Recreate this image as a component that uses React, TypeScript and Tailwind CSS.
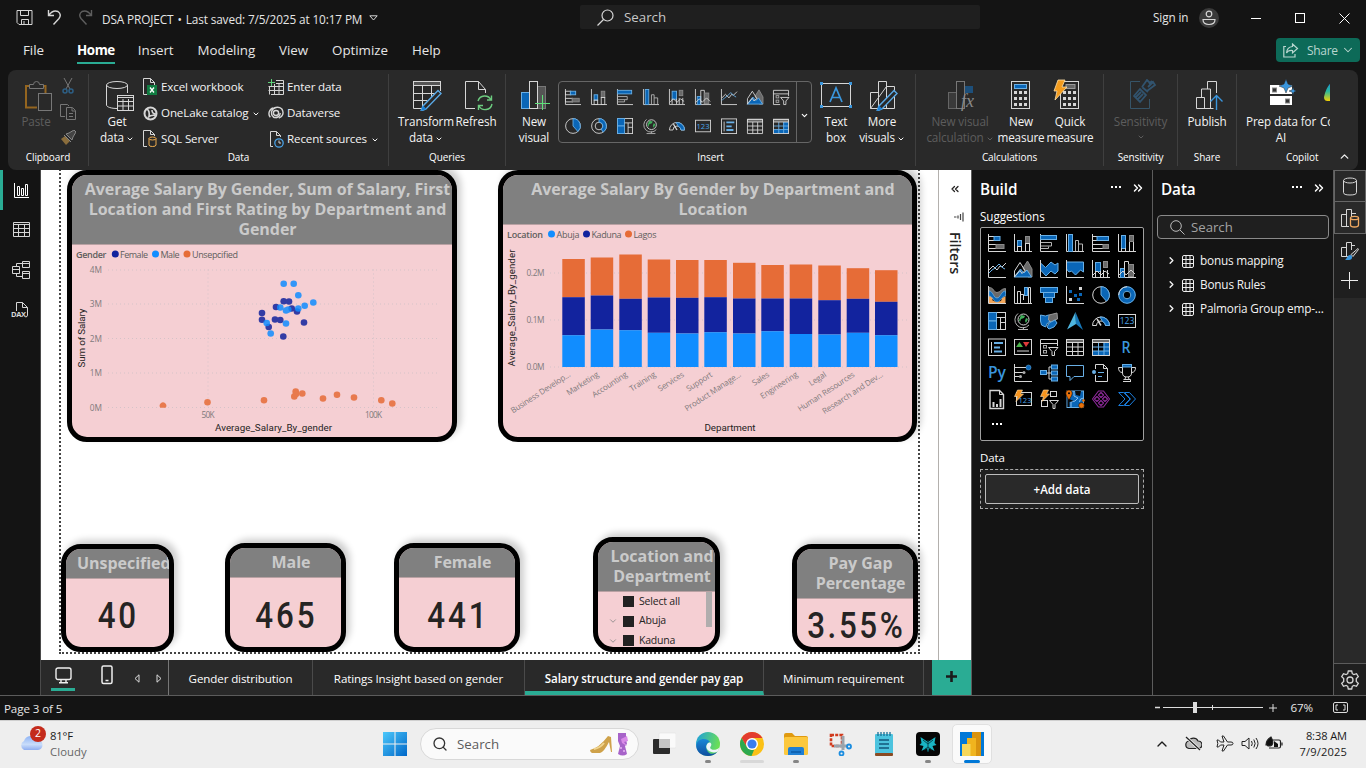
import React from "react";
import { ChevronDown, ChevronUp, ChevronRight, ChevronsLeft, ChevronsRight, Search } from "lucide-react";

const W = "#d6d6d6";
const B = "#0a66b7";
const LB = "#69afe5";
const G = "#6a6a6a";

/* ---------- Visual-type icons, drawn on an 18 x 18 grid ---------- */
const axis = <path d="M.5 0v17.5H18" stroke={W} fill="none" />;
const bolt = <path d="M3.5 0h5L6.5 4h3L2 11.5l1.5-5H.5z" fill="#f7941d" stroke="#ffe0b0" strokeWidth=".6" />;

const VIZ: Record<string, React.ReactNode> = {
  stackedBar: (<>{axis}<rect x=".5" y="2.5" width="6" height="4" stroke={W} fill="none" /><rect x="6" y="2.5" width="6" height="4" stroke={LB} fill={B} /><rect x=".5" y="10.5" width="8" height="4" stroke={W} fill="none" /><rect x="8" y="10.5" width="8" height="4" stroke="#8a8a8a" fill={G} /></>),
  stackedCol: (<>{axis}<rect x="3.5" y="6.5" width="4" height="6" stroke={LB} fill={B} /><rect x="3.5" y="12.5" width="4" height="5" stroke={W} fill="none" /><rect x="11.5" y="2.5" width="4" height="7" stroke="#8a8a8a" fill={G} /><rect x="11.5" y="9.5" width="4" height="8" stroke={W} fill="none" /></>),
  clusteredBar: (<>{axis}<rect x=".5" y="1.5" width="16" height="4" stroke={LB} fill={B} /><path d="M1 8.5h10.5v3.5H1M1 14.5h7.5v-2" stroke="#b5b5b5" fill="none" /></>),
  clusteredCol: (<>{axis}<rect x="2.5" y=".5" width="4" height="17" stroke={LB} fill={B} /><path d="M9.5 17V6.5h3V17M12.5 10h4v7" stroke="#b5b5b5" fill="none" /></>),
  bar100: (<>{axis}<rect x=".5" y="2.5" width="6" height="4" stroke={W} fill="none" /><rect x="5" y="2.5" width="11.5" height="4" stroke={LB} fill={B} /><rect x=".5" y="10.5" width="11" height="4" stroke={W} fill="none" /><rect x="11" y="10.5" width="5.5" height="4" stroke="#8a8a8a" fill={G} /></>),
  col100: (<>{axis}<rect x="3.5" y="1.5" width="4" height="13" stroke={LB} fill={B} /><path d="M3.5 14v3.5M7.5 14v3.5M11.5 7v10.5M15.5 7v10.5" stroke={W} /><rect x="11.5" y="1.5" width="4" height="6" stroke="#8a8a8a" fill={G} /></>),
  line: (<>{axis}<path d="M1 10l4-4 4 4 3-4 2 1 4-4" stroke={W} fill="none" /><path d="M1 13l3-3 3-2 4-4 4 4 2 1" stroke={LB} fill="none" /></>),
  area: (<><path d="M13.5 1L18 9v8h-4L9 8z" fill={G} stroke="#8a8a8a" /><path d="M0 17L6.5 9l3.500 4 3-3 4.500 7z" fill={B} stroke={LB} /><path d="M.5 11L6 2.500l5 8-3 3-2-3L.5 17z" fill="none" stroke={W} /></>),
  stackedArea: (<><path d="M.5 3l5 4.500L11 2l4 3 3-2v8l-3 3-4-3-5 5-5.500-6z" fill={B} stroke={LB} />{axis}</>),
  area100: (<><path d="M.5 2h17v10l-3-2-5 5-4-4-2.500 1L.5 9z" fill={B} stroke={LB} />{axis}</>),
  lineStackedCol: (<>{axis}<rect x="3.5" y="2.5" width="5" height="9" stroke={LB} fill={B} /><path d="M3.5 11v6M8.5 11v6M11.5 10v7M15.5 10v7" stroke={W} /><rect x="11.5" y="1.5" width="4" height="6" stroke="#8a8a8a" fill={G} /><path d="M1 15l4-4 4 4 4-4 4 3" stroke={W} fill="none" /></>),
  lineClusteredCol: (<>{axis}<rect x="2.5" y="8.5" width="4" height="9" stroke={LB} fill={B} /><path d="M6.5 17V1.5h4V17" stroke={W} fill="none" /><rect x="10.5" y="4.5" width="5" height="12" stroke="#8a8a8a" fill={G} /><path d="M1 15l4-4 3 4 5-5 4 4" stroke={W} fill="none" /></>),
  ribbon: (<><path d="M1 1.5c5 0 4.500 5 8 5s4-4 8.500-4V7c-4 0-5 5-8.500 5S5 6 1 6z" fill={G} stroke="#8a8a8a" /><path d="M1 9l5 3-2 2 4 2 5-1 1-3 3.500-2v7H1z" fill="#f2a65a" /><path d="M1 5c4 0 4.500 7 8 7s4-7 8.500-7v5c-4 0-5 6-8.500 6S5 10 1 10z" fill={B} stroke={LB} strokeWidth=".7" /><path d="M.5 0v17.5H18" stroke={W} fill="none" /></>),
  waterfall: (<>{axis}<path d="M3.5 17V5.5h3V17M6.5 8.5h3V14M14.5 17V1.5h2V17" stroke={W} fill="none" /><rect x="10.5" y="1.5" width="3" height="8" stroke={LB} fill={B} /></>),
  funnel: (<><rect x=".5" y="1.5" width="17" height="5" stroke={LB} fill={B} /><rect x="3.5" y="6.5" width="11" height="5" stroke={LB} fill={B} /><rect x="5.5" y="11.5" width="7" height="5" stroke={LB} fill={B} /></>),
  scatter: (<>{axis}<g fill={B}><rect x="3" y="4" width="3" height="3" /><rect x="8" y="8" width="3" height="3" /><rect x="13" y="7" width="3" height="3" /><rect x="11" y="12" width="3" height="3" /></g><rect x="13" y="1" width="3" height="3" fill={W} /><rect x="3" y="12" width="3" height="3" fill={W} /></>),
  pie: (<><circle cx="9" cy="9" r="8.3" stroke={W} fill="none" /><path d="M9 .7a8.300 8.300 0 0 1 5.500 14.500L9 9z" fill={B} stroke={LB} /></>),
  donut: (<><circle cx="9" cy="9" r="6.2" stroke={B} strokeWidth="4.5" fill="none" /><circle cx="9" cy="9" r="8.3" stroke={LB} fill="none" /><path d="M9 .7a8.300 8.300 0 0 0-8.300 8.300" stroke={W} fill="none" /><circle cx="9" cy="9" r="3.8" stroke={LB} fill="none" /></>),
  donutPart: (<><circle cx="9" cy="9" r="8.3" stroke={W} fill="none" /><circle cx="9" cy="9" r="4.3" stroke={W} fill="none" /><path d="M9 .7a8.300 8.300 0 0 1 4.500 15.200L11.500 12.500A4.300 4.300 0 0 0 9 4.700z" fill={B} stroke={LB} /></>),
  treemap: (<><rect x=".5" y=".5" width="17" height="17" stroke={W} fill="none" /><rect x=".5" y=".5" width="8" height="8.5" fill={B} stroke={LB} /><rect x=".5" y="9" width="8" height="8.5" fill={B} stroke={LB} /><path d="M8.5 5.5h9M12.5 5.5v12M12.5 10.5h5" stroke={W} /></>),
  map: (<><circle cx="9.5" cy="7.5" r="5.5" stroke={W} fill="none" /><path d="M7 3l4 1-1 2-3 1-1 3-1-2zM12 6l2 1-2 4-1-2z" fill="#3fae5a" /><path d="M4 1.5a8 8 0 1 0 11 11.500M9.500 15v2M4 17.500h10" stroke="#b5b5b5" fill="none" /></>),
  filledMap: (<><path d="M.5 3l5 1 3-1 3 1v4l-4 3-2 4-4-2-1-4z" fill={B} stroke={LB} /><path d="M9 3l8-2 .5 6-3 1-2 3-4-3z" fill={G} stroke="#9a9a9a" /><path d="M9 11l6-3 2 3-3 4-5 2-2-2z" fill={B} stroke={LB} /></>),
  azure: (<><path d="M9.500 0L1 17.500 10 12z" fill="#4fb6e0" /><path d="M9.500 0L17 18l-7-6z" fill="#1677b8" /></>),
  gauge: (<><path d="M.5 13.5a8.500 8.500 0 0 1 17 0h-4a4.500 4.500 0 0 0-9 0z" stroke={W} fill="none" /><path d="M8 5a8.500 8.500 0 0 1 9.500 8.500h-4a4.500 4.500 0 0 0-3-4z" fill={B} stroke={LB} /><path d="M9 13.5L5 7" stroke={W} strokeWidth="1.5" /></>),
  card: (<><rect x=".5" y="2.5" width="17" height="13" stroke={W} fill="none" /><text x="9" y="12.3" textAnchor="middle" fontSize="8.5" fontFamily="Open Sans, sans-serif" fill="#4aa3e8">123</text></>),
  multicard: (<><rect x=".5" y="1" width="17" height="16.5" stroke={W} fill="none" /><path d="M3.5 4v11" stroke={W} /><path d="M6 5h9M6 9.5h6M6 13.5h8" stroke={LB} strokeWidth="2" /></>),
  kpi: (<><rect x=".5" y="1.5" width="17" height="15" stroke={W} fill="none" /><path d="M2 9l3.500-5L9 9z" fill="#4bb34b" /><path d="M9 4h6.500L12 9z" fill="#e03a3a" /><path d="M3 13h12" stroke={W} /></>),
  slicer: (<><path d="M.5 1.5h17v4H.5zM.5 5v12.5H8M17.5 5v3" stroke={W} fill="none" /><rect x="3.5" y="7.5" width="3" height="2.5" stroke="#aaa" fill="none" /><rect x="3.5" y="12.5" width="3" height="2.5" stroke="#aaa" fill="none" /><path d="M8.500 9.500h9.500l-3.500 4v4h-2.500v-4z" stroke={W} fill="none" /></>),
  table: (<><rect x=".5" y="1.5" width="17" height="3" stroke={W} fill={G} /><path d="M.5 1.5h17v16H.5zM.5 9h17M.5 13.500h17M6.500 4.500v13M12 4.500v13" stroke={W} fill="none" /></>),
  matrix: (<><rect x="11.5" y="4.5" width="6" height="13" fill={B} /><rect x=".5" y="13" width="17" height="4.5" fill={B} /><path d="M.5 9h17M.5 13h17M6.500 4.500v13M12 4.500v13" stroke={LB} /><rect x=".5" y="1.5" width="17" height="3" stroke={W} fill={G} /><rect x=".5" y="1.5" width="17" height="16" stroke={W} fill="none" /></>),
  r: (<text x="8" y="14.5" textAnchor="middle" fontSize="16" fontWeight="600" textLength="9" lengthAdjust="spacingAndGlyphs" fontFamily="Open Sans, sans-serif" fill="#3a96dd">R</text>),
  py: (<text x="9" y="14" textAnchor="middle" fontSize="16" fontWeight="600" textLength="18" lengthAdjust="spacingAndGlyphs" fontFamily="Open Sans, sans-serif" fill="#3a96dd">Py</text>),
  influencers: (<>{axis}<path d="M1 3.5h12M1 8.5h8M1 12.5h5" stroke={W} /><circle cx="14.5" cy="3.5" r="2.5" fill={B} stroke={LB} strokeWidth=".5" /><circle cx="10" cy="8.5" r="1.5" fill="#aaa" /><circle cx="6.5" cy="12.5" r="1.5" fill="#aaa" /></>),
  decomposition: (<><path d="M6 9h5M9 3v12M9 3h3M9 15h3" stroke={W} fill="none" /><rect x=".5" y="6.5" width="6" height="4" stroke={LB} fill={B} /><rect x="11.5" y="1" width="6" height="4" stroke={LB} fill={B} /><rect x="11.5" y="7" width="6" height="4" stroke={LB} fill={B} /><rect x="11.5" y="13" width="6" height="4" stroke={LB} fill={B} /></>),
  qa: (<path d="M.5 1.5h17v11H8l-4 4v-4H.5z" stroke={LB} fill="none" />),
  narrative: (<><path d="M3.5 5V.5h8l4 4v13h-12V11M11.500.5v4h4" stroke={W} fill="none" /><circle cx="2" cy="8" r="2" fill={LB} /><path d="M6 8.500h6M6 12.500h4" stroke={LB} /></>),
  trophy: (<><path d="M4.500 3v6q0 4 4.500 4t4.500-4V3M4 3.500H.5q0 5 4 5M14 3.500h3.500q0 5-4 5M7.500 13l-.5 2.500M10.500 13l.5 2.500M5 17.500h8M5.500 15.500h7v2" stroke={W} fill="none" /><rect x="4.5" y=".5" width="9" height="2.5" stroke={LB} fill={B} /></>),
  paginated: (<><path d="M2 .5h9.500l4 4v14H2z" stroke={W} fill="none" strokeWidth="1.4" /><path d="M11.500.5v4h4" stroke={W} fill="none" /><path d="M5.500 12v5M9 14v3M12.500 9v8" stroke={W} strokeWidth="2" /></>),
  cardBolt: (<><rect x="2.5" y="2.5" width="15" height="13" stroke={W} fill="none" /><text x="11" y="12.5" textAnchor="middle" fontSize="7.5" fontFamily="Open Sans, sans-serif" fill="#4aa3e8">123</text>{bolt}</>),
  slicerBolt: (<><rect x="10.5" y="1.5" width="6" height="5" stroke={W} fill="none" /><rect x="1.5" y="10.5" width="6" height="6" stroke={W} fill="none" /><path d="M9.500 10.500h9l-3.500 4v4h-2v-4z" stroke={W} fill="none" />{bolt}</>),
  arcgis: (<><rect x="1" y="1" width="16.5" height="16.5" fill={B} stroke={LB} /><path d="M8 1v5l4 2-3 3-4 1v5M17.500 8l-3 1-1 3" stroke="#8cc0ee" fill="none" /><path d="M9 1h6l-1 5-4-1zM1.500 8l6 3-4 1v5h-2z" fill="#0b0b0b" /><path d="M3 0a3.200 3.200 0 0 1 3.200 3.200C6.200 5.500 3 10 3 10S-.2 5.500-.2 3.200A3.200 3.200 0 0 1 3 0z" fill="#e8710a" stroke="#000" strokeWidth=".5" /><circle cx="3" cy="3.2" r="1" fill="#000" /><circle cx="15.5" cy="15.5" r="2.8" fill="#e8710a" stroke="#000" strokeWidth=".5" /><circle cx="17.5" cy="10.5" r="1.3" fill="#e8710a" /></>),
  powerApps: (<g stroke="#8f2a9c" strokeWidth="1.1" fill="none" strokeLinejoin="round"><path d="M6.500 1h5L17.500 9l-6 8h-5L.5 9z" /><path d="M9 2.500l2.500 2.500L9 7.500 6.500 5zM5 6.500L7.500 9 5 11.500 2.500 9zM13 6.500L15.500 9 13 11.500 10.500 9zM9 10.500l2.500 2.500L9 15.500 6.500 13z" /></g>),
  automate: (<path d="M.7 2.500h5L12 9l-6.300 6.500h-5L7 9zM6.500 2.500h5L17.500 9l-6 6.500h-5l6-6.500z" stroke="#1b7fe0" fill="none" />),
};

function Viz({ name, size = 18 }: { name: string; size?: number }) {
  return <svg width={size} height={size} viewBox="0 0 18 18" overflow="visible">{VIZ[name]}</svg>;
}

/* ---------- Ribbon ---------- */
function Group({ label, className, children }: { label: string; className: string; children: React.ReactNode }) {
  return (
    <div className={`relative flex h-full shrink-0 flex-col ${className}`}>
      <div className="flex h-[78px] items-start">{children}</div>
      <div className="h-[19px] text-center text-[10px] font-medium leading-[18px] tracking-[-0.1px] text-white">{label}</div>
    </div>
  );
}
const Sep = () => <div className="mt-1 h-[92px] w-px shrink-0 bg-[#3f3f3f]" />;

function Big({ icon, lines, className, dim, caret, caretOnly }: { icon: React.ReactNode; lines: string[]; className: string; dim?: boolean; caret?: boolean; caretOnly?: boolean }) {
  return (
    <div className={`flex shrink-0 flex-col items-center text-[11.7px] leading-4 ${dim ? "text-[#5d5d5d]" : "font-medium text-[#f3f3f3]"} ${className}`}>
      <div className="flex h-[43px] items-start justify-center pt-[9px]">{icon}</div>
      {lines.map((l, i) => (
        <div key={l} className="flex items-center tracking-[-0.12px] whitespace-nowrap">
          {l}
          {caret && i === lines.length - 1 && <ChevronDown size={8} strokeWidth={3} className="mt-1 ml-0.5" />}
        </div>
      ))}
      {caretOnly && <ChevronDown size={8} strokeWidth={3} className="mt-1" />}
    </div>
  );
}

function Small({ icon, label, caret }: { icon: React.ReactNode; label: string; caret?: boolean }) {
  return (
    <div className="flex h-[26px] items-center text-[11.6px] font-medium tracking-[-0.14px] text-[#f3f3f3] whitespace-nowrap">
      <div className="mr-[3px] flex w-4 justify-center">{icon}</div>
      {label}
      {caret && <ChevronDown size={8} strokeWidth={3} className="mt-0.5 ml-1" />}
    </div>
  );
}

const calc = (
  <><rect x="5.5" y="2.5" width="18" height="27" stroke={W} fill="none" /><g fill={W}>{[12, 18, 24].map((y) => [8, 13, 18].map((x) => <rect key={`${x}-${y}`} x={x} y={y} width="3" height="3" />))}</g></>
);
const pencil = <path d="M27 11.5l3 3L15 30l-5 2 2-5z" fill="#292929" stroke="#5aa9e6" strokeWidth="1.4" />;
const pencilTip = <path d="M12 26.5l3.500 3.500-5.500 2z" fill="#1b7fd4" />;

function Ribbon() {
  const toolbar = [
    ["stackedBar", "stackedCol", "clusteredBar", "clusteredCol", "lineStackedCol", "lineClusteredCol", "line", "area", "slicer"],
    ["pie", "donutPart", "treemap", "map", "gauge", "card", "multicard", "table", "matrix"],
  ];
  return (
    <div className="relative z-10 mx-2 flex h-[100px] overflow-hidden rounded-lg bg-[#292929]">
      <Group label="Clipboard" className="w-20">
        <Big dim className="ml-[12px] w-8" lines={["Paste"]} icon={
          <svg width="32" height="32" viewBox="0 0 32 32" fill="none" className="ml-[2px]"><path d="M11 7H5v21.500h11M21 7h3.500v7" stroke="#94651f" strokeWidth="2" /><path d="M8.500 9.500v-4h4a3 3 0 0 1 6 0h4v4z" stroke="#777" fill="#292929" /><rect x="17.5" y="14.5" width="13" height="17" stroke="#777" fill="#292929" /></svg>} />
        <div className="ml-2 flex w-4 flex-col items-center gap-[10px] pt-2">
          <svg width="12" height="16" viewBox="0 0 12 16" fill="none"><path d="M2 0l6 11M10 0L4 11" stroke="#777" /><circle cx="3" cy="13" r="2" stroke="#2d5f85" strokeWidth="1.5" /><circle cx="9" cy="13" r="2" stroke="#2d5f85" strokeWidth="1.5" /></svg>
          <svg width="16" height="16" viewBox="0 0 16 16" fill="none" stroke="#777"><path d="M5 12.500H.5V.5h7L9 2M6.500 3.500h6l3 3v9h-9zM12 4v3h3M9 9.500h4M9 12.500h4" /></svg>
          <svg width="16" height="16" viewBox="0 0 16 16" fill="none"><path d="M5 6L1 9l5 6 4-4z" fill="#8a6d3c" /><path d="M4 5l7 7M6 4l6 6 1-3 3-5-2-2-5 3z" stroke="#888" fill="#444" /></svg>
        </div>
      </Group>
      <Sep />
      <Group label="Data" className="w-[299px]">
        <Big className="ml-[8px] w-10" lines={["Get", "data"]} caret icon={
          <svg width="30" height="32" viewBox="0 0 30 32" fill="none" stroke={W} className="ml-1"><ellipse cx="13" cy="6" rx="10.5" ry="3.5" /><path d="M2.500 6v20c0 2 5 3.500 10.500 3.500M23.500 6v8" /><rect x="13.5" y="16.5" width="16" height="15" /><path d="M13.500 18.500h16M13.500 22.500h16M13.500 27h16M19 20v11M24.500 20v11" /></svg>} />
        <div className="flex w-[131px] flex-col pt-1 pl-[5px]">
          <Small label="Excel workbook" icon={<svg width="16" height="18" viewBox="0 0 16 18" fill="none"><path d="M6 16.500H1.500v-16h7l4 4V7M8.500.5v4h4" stroke={W} /><rect x="5" y="7" width="10" height="10" fill="#107c41" /><path d="M8 9.500l4 5M12 9.500l-4 5" stroke="#fff" strokeWidth="1.3" /></svg>} />
          <Small label="OneLake catalog" caret icon={<svg width="15" height="15" viewBox="0 0 15 15" fill="none"><circle cx="7.5" cy="7.5" r="6" stroke={W} strokeWidth="2" /><path d="M4 3q3 2 2 8M5 11.500q3-3 7.500-2M9 4q0 4 4 4" stroke={W} strokeWidth="1.6" /></svg>} />
          <Small label="SQL Server" icon={<svg width="16" height="18" viewBox="0 0 16 18" fill="none"><path d="M5 16.500H1.500v-16h7l4 4V6M8.500.5v4h4" stroke={W} /><path d="M7 8.500v6.500q0 1.500 3.500 1.500t3.500-1.500V8.500" stroke="#f0ad4e" /><ellipse cx="10.5" cy="8.5" rx="3.5" ry="1.5" stroke="#f0ad4e" /></svg>} />
        </div>
        <div className="flex flex-col pt-1">
          <Small label="Enter data" icon={<svg width="16" height="16" viewBox="0 0 16 16" fill="none" stroke={W}><path d="M3 15.500h12.500V1.500H8M1.500 7v8.500M.5 7.500h15M.5 11.500h15M6.500 5v10M11 4v11M8 4.500h7" /><path d="M3.500 0v7M0 3.500h7" stroke="#5fd07a" /></svg>} />
          <Small label="Dataverse" icon={<svg width="17" height="14" viewBox="0 0 17 14" fill="none" stroke={W} strokeWidth="1.5"><ellipse cx="8.5" cy="7" rx="2.8" ry="2.6" /><path d="M14.500 2.500C11-.5 5 1 4 5s1 7 5 7M2.500 11.500c-3-3-1-9 3-10M14.500 2.500c3 4 1 9-3 10M13 7c0 4-4 6-8 4" /></svg>} />
          <Small label="Recent sources" caret icon={<svg width="16" height="17" viewBox="0 0 16 17" fill="none"><path d="M5 15.500H2.500V.5h6l4 4V6M8.500.5v4h4" stroke={W} /><circle cx="11" cy="12" r="4.2" stroke="#4aa3e8" strokeWidth="1.3" /><path d="M11 9.500V12h2" stroke={W} /></svg>} />
        </div>
      </Group>
      <Sep />
      <Group label="Queries" className="w-[116px]">
        <Big className="ml-[10px] w-[54px]" lines={["Transform", "data"]} caret icon={
          <svg width="32" height="32" viewBox="0 0 32 32" fill="none" className="ml-[2px]"><rect x="2.5" y="2.5" width="27" height="4" fill="#555" stroke={W} /><path d="M2.500 2.500h27V12M2.500 2.500v27H14M2.500 14.500H24M2.500 21.500h14M11.500 7v22M20.500 7v12" stroke={W} />{pencil}{pencilTip}</svg>} />
        <Big className="ml-[2px] w-[42px]" lines={["Refresh"]} icon={
          <svg width="30" height="32" viewBox="0 0 30 32" fill="none" className="ml-[3px]"><path d="M12 29.500H2.500v-27h13l7 8V14M15.500 2.500v8h7" stroke={W} /><path d="M15 22a7 7 0 0 1 13-1M28.500 16.500V21H24M29 25a7 7 0 0 1-13 2M15.500 31v-4.500H20" stroke="#6ccb7f" strokeWidth="1.4" /></svg>} />
      </Group>
      <Sep />
      <Group label="Insert" className="w-[409px]">
        <Big className="ml-[8px] w-[40px]" lines={["New", "visual"]} icon={
          <svg width="32" height="32" viewBox="0 0 32 32" fill="none" className="ml-[2px]"><rect x="2.5" y="13.5" width="8" height="16" fill={B} stroke={LB} /><rect x="18.5" y="7.5" width="8" height="22" fill="#555" stroke="#777" /><rect x="10.5" y="2.5" width="8" height="27" fill="#292929" stroke={W} /><path d="M23.500 16v15M16 24.500h15" stroke="#5fe07a" /></svg>} />
        <div className="mt-[11px] ml-1 flex h-[62px] w-[254px] rounded-[4px] border border-[#666]">
          <div className="-mt-px grid grid-cols-[repeat(9,26px)] grid-rows-[repeat(2,29px)] pt-px pl-px">
            {toolbar.flat().map((n) => <div key={n} className="flex items-center justify-center"><Viz name={n} size={16} /></div>)}
          </div>
          <div className="ml-[2px] flex flex-1 items-center justify-center border-l border-[#666] pt-1.5 text-white"><ChevronDown size={9} strokeWidth={3} /></div>
        </div>
        <Big className="ml-[5px] w-[38px]" lines={["Text", "box"]} icon={
          <svg width="34" height="32" viewBox="0 0 34 32" fill="none"><rect x="2.5" y="4.5" width="29" height="23" stroke={W} />{[[1, 3], [30, 3], [1, 26], [30, 26]].map(([x, y]) => <rect key={`${x}${y}`} x={x} y={y} width="3" height="3" fill="#3a96dd" />)}<path d="M11 23l6-14 6 14M13 18.500h8" stroke="#3a96dd" strokeWidth="1.7" /></svg>} />
        <Big className="ml-[3px] w-[48px]" lines={["More", "visuals"]} caret icon={
          <svg width="32" height="32" viewBox="0 0 32 32" fill="none" className="ml-[2px]"><path d="M3.500 29.500v-16h8M11.500 29.500v-27h8v27M19.500 7.500h8v22h-24z" stroke={W} />{pencil}{pencilTip}</svg>} />
      </Group>
      <Sep />
      <Group label="Calculations" className="w-[187px]">
        <Big dim className="ml-[6px] w-[76px]" lines={["New visual", "calculation"]} caret icon={
          <svg width="32" height="32" viewBox="0 0 32 32" fill="none"><rect x="4.5" y="13.5" width="8" height="16" stroke="#666" fill="#3a3a3a" /><rect x="12.5" y="2.5" width="8" height="27" stroke="#777" /><rect x="21" y="7" width="8" height="7" fill="#1d4f7a" /><text x="17" y="28" fontSize="18" fontStyle="italic" fontFamily="Liberation Serif, serif" fill="#8a8a8a">fx</text></svg>} />
        <Big className="w-[46px]" lines={["New", "measure"]} icon={<svg width="29" height="32" viewBox="0 0 29 32" overflow="visible" className="-ml-[2px]">{calc}<rect x="8.5" y="5.5" width="12" height="4" fill={B} stroke={LB} /></svg>} />
        <Big className="ml-[3px] w-[46px]" lines={["Quick", "measure"]} icon={<svg width="32" height="32" viewBox="0 0 32 32" overflow="visible" className="-ml-[3px]"><g transform="translate(2 0)">{calc}<rect x="11" y="5.5" width="9" height="4" fill="#666" stroke="#999" /></g><path d="M5 1h7L9 8h5L2 21l2-9H1z" fill="#f29b1d" stroke="#ffe0a8" strokeWidth=".8" /></svg>} />
      </Group>
      <Sep />
      <Group label="Sensitivity" className="w-[73px]">
        <Big dim className="w-[73px]" lines={["Sensitivity"]} caretOnly icon={
          <svg width="32" height="32" viewBox="0 0 32 32" fill="none" stroke="#31536e"><path d="M15 2.500H5.500v27h19V20" stroke="#365468" /><path d="M9 17l6-7 6 6-6 7zM11 18l5-5M13 20l5-5M17 8l5-7 3 3M17 8l6 5M24 5l3-3M22 12l8-6-2-3-5 5" strokeWidth="1.8" /></svg>} />
      </Group>
      <Sep />
      <Group label="Share" className="w-[58px]">
        <Big className="w-[58px]" lines={["Publish"]} icon={
          <svg width="32" height="32" viewBox="0 0 32 32" fill="none" className="ml-1"><path d="M3.500 29.500v-11h8v11M8.500 18v-8h9v19M14.500 10V2.500h9V14M3.500 29.500h17" stroke={W} strokeLinejoin="round" /><path d="M23.500 31V17M17.500 22.500l6-6 6 6" stroke="#3a96dd" strokeWidth="1.4" /></svg>} />
      </Group>
      <Sep />
      <div className="flex w-[93px] shrink-0 flex-col overflow-hidden">
        <div className="flex h-[78px]">
          <Big className="ml-[9px] w-[70px]" lines={["Prep data for", "AI"]} icon={
            <svg width="30" height="32" viewBox="0 0 30 32"><rect x="4" y="6" width="22" height="9" fill="#fff" /><rect x="4" y="17" width="22" height="9" fill="#fff" /><rect x="6.5" y="9" width="4" height="4" fill="#333" stroke="#888" /><rect x="19.5" y="20" width="4" height="4" fill="#333" stroke="#888" /><path d="M20 0l2 5 5 2-5 2-2 5-2-5-5-2 5-2zM27 8l1 3 3 1-3 1-1 3-1-3-3-1 3-1z" fill="#3a96dd" stroke="#292929" strokeWidth=".5" /></svg>} />
          <Big className="ml-[4px] w-[40px] !items-start" lines={["Copilot"]} icon={
            <svg width="32" height="32" viewBox="0 0 32 32" className="ml-1"><defs><linearGradient id="cop" x2="0" y2="1"><stop offset="0" stopColor="#1b86e0" /><stop offset=".5" stopColor="#27b8a0" /><stop offset="1" stopColor="#f5d000" /></linearGradient></defs><path d="M10 2Q3 5 0 18c0 5 4 4 10 4z" fill="url(#cop)" /></svg>} />
        </div>
        <div className="h-[19px] pl-[49px] text-[10px] font-medium leading-[18px] tracking-[-0.1px] text-white">Copilot</div>
      </div>
      <div className="flex flex-1 items-end pb-[7px] pl-[8px] text-[#eee]"><ChevronUp size={13} strokeWidth={2.5} /></div>
    </div>
  );
}

/* ---------- Report canvas ---------- */
function Card({ title, className, children }: { title: string; className: string; children: React.ReactNode }) {
  return (
    <div className={`absolute flex flex-col overflow-hidden rounded-[20px] border-[5px] border-black bg-[#f5cfd3] shadow-[4px_-4px_7px_rgba(0,0,0,0.2)] ${className}`}>
      <div className="shrink-0 border-b border-[#b9a1a3] bg-[#808080] pt-[4px] pb-[5px] pl-[11px] text-center text-[16px] leading-5 font-bold tracking-[-0.04px] text-[#cacaca]">{title}</div>
      {children}
    </div>
  );
}

const FEMALE = [[262, 313.5], [262, 320.3], [268.7, 327.5], [275, 320], [280.3, 320.5], [276, 307.5], [283.7, 301.7], [289, 302], [291.7, 309], [297, 312], [304, 323], [283.3, 337]];
const MALE = [[283.7, 284.3], [293.7, 284.3], [298.3, 295.7], [313.3, 303], [304.7, 306.3], [298.3, 309], [280.3, 308], [286, 311], [288.3, 310], [286, 324], [266.7, 323.5], [270.7, 334]];
const UNSPEC = [[207.5, 402.7], [264, 400.7], [294.3, 397], [295.7, 392], [296, 394.5], [302.3, 394], [323, 399], [337, 395.3], [354, 398], [381.3, 400.7], [392.3, 404]];

function Scatter() {
  return (
    <svg viewBox="72 245.5 380 192" className="min-h-0 flex-1 font-['Open_Sans',sans-serif]" fontSize="9">
      <g fill="#605e5c">
        <text x="76" y="258" fontWeight="600" textLength="30.5">Gender</text>
        <circle cx="115.3" cy="254.5" r="3.5" fill="#12239e" /><text x="120" y="258" textLength="28">Female</text>
        <circle cx="155.5" cy="254.5" r="3.5" fill="#118dff" /><text x="160.5" y="258" textLength="19">Male</text>
        <circle cx="187" cy="254.5" r="3.5" fill="#e66c37" /><text x="192" y="258" textLength="46">Unsepcified</text>
      </g>
      <g stroke="#d5c3c8" strokeDasharray="1 3">
        {[270.5, 304.5, 339, 373.5, 408].map((y) => <path key={y} d={`M108 ${y}H438`} />)}
        <path d="M208 270V408M373.5 270V408" />
      </g>
      <g fill="#807a7c" fontSize="8.3">
        {["4M", "3M", "2M", "1M", "0M"].map((t, i) => <text key={t} x="102" y={273.5 + i * 34.4} textAnchor="end">{t}</text>)}
        <text x="208" y="418" textAnchor="middle" textLength="13">50K</text><text x="373.5" y="418" textAnchor="middle" textLength="17">100K</text>
      </g>
      <g fill="#12239e" opacity=".85">{FEMALE.map(([x, y], i) => <circle key={i} cx={x} cy={y} r="3.3" />)}</g>
      <g fill="#118dff" opacity=".85">{MALE.map(([x, y], i) => <circle key={i} cx={x} cy={y} r="3.3" />)}</g>
      <g fill="#e66c37" opacity=".85"><path d="M160.400 408.300a3.300 3.300 0 1 1 5.200 0z" />{UNSPEC.map(([x, y], i) => <circle key={i} cx={x} cy={y} r="3.3" />)}</g>
      <g fill="#252423" fontFamily="Roboto, sans-serif" fontSize="9.8">
        <text x="273.5" y="431" textAnchor="middle" textLength="117">Average_Salary_By_gender</text>
        <text transform="translate(84.5 338.5) rotate(-90)" textAnchor="middle" textLength="59">Sum of Salary</text>
      </g>
    </svg>
  );
}

const BARS: [string, number, number, number, number][] = [
  ["Business Develop...", 562.3, 259.5, 297.7, 335.7],
  ["Marketing", 590.7, 258, 296, 330],
  ["Accounting", 619.3, 255, 299.3, 330.7],
  ["Training", 647.7, 260, 298, 333.3],
  ["Services", 676, 260.5, 298.3, 334],
  ["Support", 704.3, 260.5, 297.7, 332.7],
  ["Product Manage...", 733, 263.3, 299, 334],
  ["Sales", 761.3, 265.5, 299, 331.7],
  ["Engineering", 789.7, 265, 299, 334.5],
  ["Legal", 818.3, 266, 300.7, 335],
  ["Human Resources", 846.7, 268.7, 299.3, 333.3],
  ["Research and Dev...", 875, 270.7, 302.3, 335.7],
];

function Bars() {
  return (
    <svg viewBox="503 225.5 409 212" className="min-h-0 flex-1 font-['Open_Sans',sans-serif]" fontSize="9">
      <g fill="#605e5c">
        <text x="507" y="238" fontWeight="600" textLength="36">Location</text>
        <circle cx="551.5" cy="234.5" r="3.5" fill="#118dff" /><text x="556.5" y="238" textLength="23">Abuja</text>
        <circle cx="586.5" cy="234.5" r="3.5" fill="#12239e" /><text x="591.5" y="238" textLength="30">Kaduna</text>
        <circle cx="628.5" cy="234.5" r="3.5" fill="#e66c37" /><text x="633.5" y="238" textLength="23">Lagos</text>
      </g>
      <g stroke="#d5c3c8" strokeDasharray="1 3">{[273.5, 320.5, 367.5].map((y) => <path key={y} d={`M550 ${y}H908`} />)}</g>
      <g fill="#807a7c" fontSize="8.3">
        {["0.2M", "0.1M", "0.0M"].map((t, i) => <text key={t} x="544.5" y={276.3 + i * 47} textAnchor="end" textLength="18">{t}</text>)}
      </g>
      {BARS.map(([n, x, a, b, c]) => (
        <g key={n}>
          <rect x={x} y={a} width="22.5" height={b - a} fill="#e66c37" />
          <rect x={x} y={b} width="22.5" height={c - b} fill="#12239e" />
          <rect x={x} y={c} width="22.5" height={367.5 - c} fill="#118dff" />
          <text transform={`translate(${x + 8.5} 376.5) rotate(-33)`} textAnchor="end" fontSize="8" letterSpacing="-.15" fill="#807a7c">{n}</text>
        </g>
      ))}
      <g fill="#252423" fontFamily="Roboto, sans-serif" fontSize="9.8">
        <text x="730" y="431" textAnchor="middle" textLength="51">Department</text>
        <text transform="translate(515 308.5) rotate(-90)" textAnchor="middle" textLength="117">Average_Salary_By_gender</text>
      </g>
    </svg>
  );
}

const Num = ({ children, className }: { children: string; className: string }) => (
  <div className={`flex flex-1 scale-x-[.87] items-center justify-center font-[Roboto,sans-serif] text-[36px] leading-none font-medium text-[#252423] ${className}`}>{children}</div>
);

function Canvas() {
  return (
    <div className="relative min-w-0 flex-1 overflow-hidden bg-white">
      <div className="absolute -top-2 left-[18px] h-[492px] w-[861px] border-2 border-dotted border-[#444]" />
      <Card title="Average Salary By Gender, Sum of Salary, First Location and First Rating by Department and Gender" className="top-0 left-[26px] h-[272px] w-[390px]"><Scatter /></Card>
      <Card title="Average Salary By Gender by Department and Location" className="top-0 left-[457px] h-[272px] w-[419px]"><Bars /></Card>
      <Card title="Unspecified" className="top-[374px] left-[20px] h-[108px] w-[113px]"><Num className="pt-[5px] pl-[2px] tracking-[3.2px]">40</Num></Card>
      <Card title="Male" className="top-[373px] left-[184px] h-[109px] w-[121px]"><Num className="pt-[6px] pl-[2px] tracking-[3.4px]">465</Num></Card>
      <Card title="Female" className="top-[373px] left-[353px] h-[109px] w-[126px]"><Num className="pt-[6px] pl-[3px] tracking-[3.4px]">441</Num></Card>
      <Card title="Location and Department" className="top-[367px] left-[552px] h-[115px] w-[127px]">
        <div className="flex min-h-0 flex-1 justify-between overflow-hidden">
          <div className="pl-[10px] text-[10.5px] tracking-[-0.2px] text-[#252423]">
            {["Select all", "Abuja", "Kaduna"].map((t, i) => (
              <div key={t} className="flex h-[19.5px] items-center">
                <div className="w-[15px] text-[#888]">{i > 0 && <ChevronDown size={10} strokeWidth={2} />}</div>
                <div className="mr-[5px] size-[11px] bg-[#222]" />{t}
              </div>
            ))}
          </div>
          <div className="mr-[3px] h-[35px] w-[6px] bg-[#b0adad]" />
        </div>
      </Card>
      <Card title="Pay Gap Percentage" className="top-[374px] left-[751px] h-[108px] w-[126px]"><Num className="pt-[6px] pl-[3px] tracking-[3px]">3.55%</Num></Card>
    </div>
  );
}

function PageTabs() {
  const tab = "flex items-center justify-center border-r border-[#4a4a4a] text-[11.6px] tracking-[-0.12px] whitespace-nowrap text-white";
  return (
    <div className="flex h-[35px] shrink-0 bg-[#292929]">
      <div className="flex w-[128px] items-start border-r border-[#777] pl-[10px]">
        <div className="flex h-[31px] w-6 items-start justify-center border-b-[3px] border-[#2aac94] pt-[7px]">
          <svg width="17" height="17" viewBox="0 0 17 17" fill="none" stroke="#eee" strokeWidth="1.4"><rect x="1" y="1" width="15" height="11.5" rx="2" /><path d="M6 12.500v3M11 12.500v3M4 15.800h9" /></svg>
        </div>
        <svg className="mt-[5px] ml-[26px]" width="12" height="20" viewBox="0 0 12 20" fill="none" stroke="#eee" strokeWidth="1.5"><rect x="1" y="1" width="10" height="17.5" rx="1.5" /><path d="M4.500 15.500h3" /></svg>
        <svg className="mt-[14px] ml-[20px]" width="8" height="9" viewBox="0 0 8 9" fill="none" stroke="#ddd"><path d="M6 .8v7.400L2 4.500z" /></svg>
        <svg className="mt-[14px] ml-[14px]" width="8" height="9" viewBox="0 0 8 9" fill="none" stroke="#ddd"><path d="M2 .8v7.400L6 4.500z" /></svg>
      </div>
      <div className={`w-[144px] pt-[2px] ${tab}`}>Gender distribution</div>
      <div className={`w-[212px] pt-[2px] ${tab}`}>Ratings Insight based on gender</div>
      <div className={`w-[239px] border-b-4 border-b-[#2aac94] pt-[6px] font-semibold ${tab}`}>Salary structure and gender pay gap</div>
      <div className={`w-[160px] pt-[2px] ${tab}`}>Minimum requirement</div>
      <div className="ml-auto flex w-[39px] items-center justify-center bg-[#2aac94] pb-0.5">
        <svg width="11" height="11" viewBox="0 0 11 11"><path d="M5.500 0v11M0 5.500h11" stroke="#1b1b1b" strokeWidth="2.6" /></svg>
      </div>
    </div>
  );
}

/* ---------- Side panes ---------- */
const PANE_VIZ = [
  "stackedBar", "stackedCol", "clusteredBar", "clusteredCol", "bar100", "col100",
  "line", "area", "stackedArea", "area100", "lineStackedCol", "lineClusteredCol",
  "ribbon", "waterfall", "funnel", "scatter", "pie", "donut",
  "treemap", "map", "filledMap", "azure", "gauge", "card",
  "multicard", "kpi", "slicer", "table", "matrix", "r",
  "py", "influencers", "decomposition", "qa", "narrative", "trophy",
  "paginated", "cardBolt", "slicerBolt", "arcgis", "powerApps", "automate",
];

const Dots = () => <svg width="11" height="3" viewBox="0 0 11 3" fill="#fff"><rect width="2" height="2" /><rect x="4" width="2" height="2" /><rect x="8" width="2" height="2" /></svg>;

function PaneHeader({ title }: { title: string }) {
  return (
    <div className="flex h-[38px] items-center pr-[7px] text-white">
      <span className="pt-px text-[15.3px] font-semibold tracking-[-0.1px]">{title}</span>
      <div className="ml-auto flex items-center gap-[9px] pb-[3px]"><Dots /><ChevronsRight size={14} strokeWidth={2.5} /></div>
    </div>
  );
}

const SideTable = () => <svg width="12" height="13" viewBox="0 0 12 13" fill="none" stroke="#eee"><rect x=".5" y=".5" width="11" height="12" rx="1.5" /><path d="M.5 4.500h11M.5 8.500h11M4 .5v12M8 .5v12" /></svg>;

function BuildPane() {
  return (
    <div className="w-[181px] shrink-0 border-l border-[#5c5c5c] bg-[#141414] pl-2">
      <PaneHeader title="Build" />
      <div className="h-[19px] text-[11.7px] leading-4 tracking-[-0.05px] text-white">Suggestions</div>
      <div className="h-[214px] w-[164px] rounded-[2px] border border-[#a0a0a0] bg-black pt-[2px] pl-[3px]">
        <div className="grid auto-rows-[26px] grid-cols-[repeat(6,26px)]">
          {PANE_VIZ.map((n) => <div key={n} className="flex items-center justify-center"><Viz name={n} /></div>)}
          <div className="flex items-center justify-center pb-0.5"><Dots /></div>
        </div>
      </div>
      <div className="mt-2 h-5 text-[11.5px] leading-[18px] tracking-[-0.1px] text-white">Data</div>
      <div className="h-10 w-[164px] border border-dashed border-[#aaa] bg-[#202020] p-1">
        <div className="flex h-full items-center justify-center rounded-[2px] border border-[#bdbdbd] bg-[#292929] pt-px text-[11.6px] font-semibold text-white">+Add data</div>
      </div>
    </div>
  );
}

function DataPane() {
  return (
    <div className="w-[181px] shrink-0 border-l border-[#5c5c5c] bg-[#141414]">
      <div className="pl-2"><PaneHeader title="Data" /></div>
      <div className="mt-[7px] ml-1 flex h-6 w-[172px] items-center rounded-[4px] border border-[#8a8a8a] bg-[#1f1f1f] pl-3 text-[13.2px] text-[#a3a3a3]">
        <svg width="15" height="15" viewBox="0 0 15 15" fill="none" stroke="#bbb" className="mr-[6px]"><circle cx="6" cy="6" r="5.3" /><path d="M10 10l4.500 4.500" /></svg><span className="pt-px">Search</span>
      </div>
      <div className="mt-[10px]">
        {["bonus mapping", "Bonus Rules", "Palmoria Group emp-..."].map((t) => (
          <div key={t} className="flex h-6 items-center pl-[13px] text-[11.8px] font-medium tracking-[-0.2px] whitespace-nowrap text-[#f3f3f3]">
            <ChevronRight size={11} strokeWidth={3} className="-mt-0.5 mr-[5px]" /><SideTable /><span className="ml-[6px]">{t}</span>
          </div>
        ))}
      </div>
    </div>
  );
}

function Rail() {
  return (
    <div className="flex w-[33px] shrink-0 flex-col border-l border-[#5c5c5c] bg-[#292929]">
      <div className="flex h-[128px] flex-col items-center bg-[#1f1f1f]">
        <div className="flex h-8 w-full items-center justify-center border border-[#666] bg-[#292929]">
          <svg width="16" height="19" viewBox="0 0 16 19" fill="none" stroke={W}><ellipse cx="8" cy="3.5" rx="6.5" ry="2.5" /><path d="M1.500 3.500V15.500q0 2.500 6.500 2.500t6.500-2.500V3.500" /></svg>
        </div>
        <div className="flex h-8 w-full items-center justify-center border border-t-0 border-[#666] bg-[#292929]">
          <svg width="20" height="20" viewBox="0 0 20 20" fill="none"><path d="M9 18.500H1.500V6.500H6M6.500 18V1.500h5V9M11.500 5.500H16" stroke={W} /><path d="M10.500 10v7q0 2 4 2t4-2v-7" stroke="#f0a860" strokeWidth="1.3" /><ellipse cx="14.5" cy="10" rx="4" ry="1.7" stroke="#f0a860" strokeWidth="1.3" /></svg>
        </div>
        <div className="flex h-8 items-center pt-0.5">
          <svg width="20" height="20" viewBox="0 0 20 20" fill="none"><path d="M8 15.500H1.500V6.500H6M6.500 15V1.500h5V9M11.500 4.500H15" stroke={W} /><path d="M18 7.500l-7 6 2 2 5.500-7z" stroke={W} fill="#333" /><path d="M5 19c2-1 2-5 5-5s3 5-1 5z" fill="#3a96dd" /></svg>
        </div>
        <svg className="mt-[6px] -ml-px" width="17" height="17" viewBox="0 0 17 17"><path d="M8.500 0v17M0 8.500h17" stroke="#eee" /></svg>
      </div>
      <div className="mt-auto flex h-[32px] items-center justify-center border-t border-[#5c5c5c] bg-[#1f1f1f]">
        <svg width="20" height="20" viewBox="0 0 20 20" fill="none" stroke={W} strokeWidth="1.3"><path d="M8.300 1h3.400l.6 2.700 1.600.9 2.600-.9 1.800 3-2 1.900v2.800l2 1.900-1.800 3-2.600-.9-1.600.9-.6 2.700H8.300l-.6-2.700-1.600-.9-2.600.9-1.800-3 2-1.900V8.600l-2-1.900 1.800-3 2.600.9 1.600-.9z" /><circle cx="10" cy="10" r="3" /></svg>
      </div>
    </div>
  );
}

function NavRail() {
  return (
    <div className="flex w-[41px] shrink-0 flex-col border-r border-[#4a4a4a] bg-[#141414]">
      <div className="flex h-10 items-center border-l-[3px] border-[#2aac94] pl-[11px]">
        <svg width="15" height="15" viewBox="0 0 15 15" fill="none" stroke="#fff"><path d="M.5 0v14.500H15M3.500 12.500v-9h2v9zM7.500 12.500v-7h2v7zM11.500 12.500V1.500h2v11z" /></svg>
      </div>
      <div className="flex h-10 items-center pb-0.5 pl-[13px]">
        <svg width="17" height="15" viewBox="0 0 17 15" fill="none" stroke={W}><path d="M.5.5h16v14H.5zM.5 2.500h16M.5 6.500h16M.5 10.500h16M5.500 2.500v12M11.500 2.500v12" /></svg>
      </div>
      <div className="flex h-10 items-center pl-[12px]">
        <svg width="18" height="18" viewBox="0 0 18 18" fill="none" stroke={W}><path d="M.5 5.500h7v7h-7zM.5 8.500h7M10.500.5h7v6h-7zM10.500 2.500h7M10.500 10.500h7v7h-7zM10.500 12.500h7M4.500 5V2.500h6M4.500 13v2.500h6" /></svg>
      </div>
      <div className="flex h-10 items-center pl-[11px]">
        <svg width="19" height="18" viewBox="0 0 19 18" fill="none" stroke={W}><path d="M5.500 10V1.500h6l5 5V14M11.500 1.500v5h5M14.500 16q2 0 2-2" /><text x="0" y="16" fontSize="7.5" fontWeight="700" textLength="15" fontFamily="Open Sans, sans-serif" stroke="none" fill={W}>DAX</text></svg>
      </div>
    </div>
  );
}

/* ---------- Taskbar ---------- */
function AppCell({ children, mark }: { children: React.ReactNode; mark?: string }) {
  return (
    <div className="flex w-11 flex-col items-center pt-[11px]">
      <div className="flex size-6 items-center justify-center">{children}</div>
      {mark && <div className={`mt-[4px] h-[3px] rounded-full ${mark}`} />}
    </div>
  );
}

function Taskbar() {
  return (
    <div className="flex h-12 shrink-0 border-t border-[#cfcfcf] bg-[#eeeeee]">
      <div className="flex w-[383px] pl-[18px]">
        <div className="relative mt-[9px] h-6 w-[27px]">
          <svg width="27" height="26" viewBox="0 0 27 26"><defs><linearGradient id="cl" x2="0" y2="1"><stop offset="0" stopColor="#8fb4f5" /><stop offset=".6" stopColor="#c9ddfa" /><stop offset="1" stopColor="#8faef0" /></linearGradient></defs><path d="M6 20a5 5 0 0 1 0-9 7 7 0 0 1 13-1 5 5 0 0 1 1 10z" fill="url(#cl)" /></svg>
          <div className="absolute -top-[4px] left-[12px] flex size-4 items-center justify-center rounded-full bg-[#c42b1c] text-[10.5px] text-white">2</div>
        </div>
        <div className="ml-[5px] pt-[7px] text-[11.3px] leading-4 tracking-[-0.2px] text-[#1b1b1b]"><div>81°F</div><div className="tracking-[0.1px] text-[#666]">Cloudy</div></div>
      </div>
      <svg className="mt-[11px]" width="24" height="24" viewBox="0 0 23 23"><defs><linearGradient id="win" x2="1" y2="1"><stop offset="0" stopColor="#4cc8fb" /><stop offset="1" stopColor="#0067c8" /></linearGradient></defs><path d="M0 0h11v11H0zM12 0h11v11H12zM0 12h11v11H0zM12 12h11v11H12z" fill="url(#win)" /></svg>
      <div className="mt-[7px] ml-[13px] flex h-8 w-[219px] items-center rounded-full border border-[#d8d8d8] bg-[#fafafa] pl-[11px] text-[13.3px] text-[#5c5c5c]">
        <Search size={16} strokeWidth={2} color="#333" /><span className="ml-[9px] pt-px">Search</span>
        <svg className="mr-2 ml-auto" width="42" height="26" viewBox="0 0 42 26"><path d="M2 19q9-2 18-14l3 1 1 15h-1l-2-10q-5 10-9 11H4q-2-1-2-3z" fill="#cfa24a" /><path d="M6 18q6-1 10-6" stroke="#f0d590" strokeWidth="2" fill="none" /><path d="M30 2h8v6l1 5-2 2 2 8q-4 3-9 0l2-8-2-5z" fill="#a763c9" /><path d="M33 8l6-3 1 5-4 1 3 4-5-3z" fill="#d98be8" /><circle cx="33" cy="17" r="1" fill="#e9b6f5" /><circle cx="36" cy="20" r="1" fill="#e9b6f5" /></svg>
      </div>
      <div className="ml-[3px] flex">
        <AppCell><svg width="24" height="24" viewBox="0 0 24 24"><rect x="7" y="1" width="17" height="15" rx="1" fill="#fafafa" stroke="#ddd" strokeWidth=".5" /><rect x="1" y="7" width="17" height="15" rx="1" fill="#2b2b2b" /><rect x="7" y="7" width="11" height="9" fill="#c4c4c4" /></svg></AppCell>
        <AppCell mark="w-[6px] bg-[#858585]"><svg width="24" height="24" viewBox="0 0 24 24"><defs><linearGradient id="e1" x2="1" y2=".3"><stop offset="0" stopColor="#1b9de2" /><stop offset="1" stopColor="#6adf57" /></linearGradient><linearGradient id="e2" x2="0" y2="1"><stop offset="0" stopColor="#1987d8" /><stop offset="1" stopColor="#0f4e9e" /></linearGradient></defs><circle cx="12" cy="12" r="12" fill="url(#e1)" /><path d="M.3 14.500C0 6 11 5 14 10c-4 0-6 8 0 11.500 3 1 6-.5 7.500-2C19 23 15.500 24 12 24 5.500 24 .5 19.500.3 14.500z" fill="url(#e2)" /><path d="M14 10.500c3 2 0 4 .2 5.500.8 2.500 6.500 2.500 9.300-.5-.5 1.800-1.200 3.200-2.200 4.300C16 22 9 18 10.500 13.500c.5-1.700 2-3 3.500-3z" fill="#eef4fa" /></svg></AppCell>
        <AppCell mark="w-6 bg-[#d8d8d8]"><svg width="24" height="24" viewBox="0 0 24 24"><circle cx="12" cy="12" r="12" fill="#fbc116" /><path d="M1.600 6A12 12 0 0 1 22.400 6H12L6.800 15z" fill="#e33b2e" /><path d="M1.600 6L6.800 15 12 18l2 0-2.500 6A12 12 0 0 1 1.600 6z" fill="#2da94f" /><circle cx="12" cy="12" r="6" fill="#fff" /><circle cx="12" cy="12" r="4.6" fill="#3a7df0" /></svg></AppCell>
        <AppCell mark="w-[6px] bg-[#858585]"><svg width="24" height="24" viewBox="0 0 24 24"><path d="M0 3q0-2 2-2h6l3 3h11q2 0 2 2v6H0z" fill="#e09a10" /><rect y="5" width="24" height="18" rx="1.5" fill="#fcc83e" /><path d="M4 23v-6q0-2 2-2h12q2 0 2 2v6z" fill="#1f7fd4" /><path d="M7 20h10" stroke="#0b5aa8" strokeWidth="1.5" /></svg></AppCell>
        <AppCell><svg width="24" height="24" viewBox="0 0 24 24" fill="none"><rect x="3" y="3" width="11" height="11" stroke="#d13b1e" strokeWidth="2.6" strokeDasharray="3 1.2" /><path d="M15 4v14M6 14h14" stroke="#9aa4ad" strokeWidth="3" /><circle cx="21" cy="14.5" r="2" stroke="#1b8de0" strokeWidth="1.8" /><circle cx="13.5" cy="21.5" r="2" stroke="#1b8de0" strokeWidth="1.8" /></svg></AppCell>
        <AppCell><svg width="20" height="24" viewBox="0 0 20 24"><rect x="1" y="2" width="18" height="20" rx="1" fill="#4cc3de" /><rect x="1" y="21" width="18" height="3" rx="1" fill="#8a4a22" /><path d="M4 0v4M7 0v4M10 0v4M13 0v4M16 0v4" stroke="#1a6f94" strokeWidth="1.3" /><path d="M5 8h10M5 12h10M5 16h10" stroke="#12587c" strokeWidth="1.7" /></svg></AppCell>
        <AppCell mark="w-[6px] bg-[#858585]"><svg width="24" height="24" viewBox="0 0 24 24"><rect width="24" height="24" rx="4" fill="#050505" /><path d="M12 10l7.500-5-1 6 2 2-4 1 2 5-5-3-1.500 4-1.500-4-5 3 2-5-4-1 2-2-1-6z" fill="#19b5c4" /><path d="M12 8v12M12 12L7 8M12 12l5-4M12 15l-4 3M12 15l4 3" stroke="#064a52" /></svg></AppCell>
        <div className="mt-[3px] ml-[2px] h-[40px] w-[40px] rounded-[5px] border border-[#e0e0e0] bg-[#fafafa]">
          <div className="flex flex-col items-center pt-[7px]">
            <svg width="24" height="24" viewBox="0 0 24 24"><rect width="24" height="24" fill="#0078d7" /><rect x="12" width="9" height="24" fill="#d9930f" /><rect x="7" y="6" width="9" height="18" fill="#f0b41e" /><rect x="2" y="12" width="8.5" height="12" fill="#f6d75a" /></svg>
            <div className="mt-[4px] h-[3px] w-4 rounded-full bg-[#0078d7]" />
          </div>
        </div>
      </div>
      <div className="ml-auto flex items-center pr-[19px] pb-0.5 text-[#1b1b1b]">
        <ChevronUp size={16} strokeWidth={2} className="mr-[14px]" />
        <svg className="mr-[14px]" width="18" height="15" viewBox="0 0 18 15" fill="none" stroke="#222" strokeWidth="1.2"><path d="M5 12.500a3.800 3.800 0 0 1 0-7.500 5 5 0 0 1 9 0 3.800 3.800 0 0 1 1 7.500z" fill="#bbb" /><path d="M2 1l14 13" stroke="#eee" strokeWidth="3" /><path d="M2 1l14 13" /></svg>
        <svg className="mr-[7px]" width="18" height="17" viewBox="0 0 18 17" fill="none" stroke="#222"><path d="M1 5h1.500L4.500 7H8L6 1h1.500L11.500 7H15q2 0 2 1.500T15 10h-3.500l-4 6H6l2-6H4.500l-2 2H1l.8-3.500z" /></svg>
        <svg className="mr-[6px]" width="18" height="15" viewBox="0 0 18 15" fill="none" stroke="#222"><path d="M1 5.500h3L8 2v11L4 9.500H1zM10.500 5q1.500 2.500 0 5M12.800 3.500q2.700 4 0 8M15 2q4 5.500 0 11" /></svg>
        <svg className="mr-[17px]" width="18" height="15" viewBox="0 0 18 15" fill="none" stroke="#222" strokeWidth="1.2"><path d="M8 4h6q1.500 0 1.500 1.500v5q0 1.500-1.500 1.500H4M17 6.500v3" /><path d="M1 9q0-5 5-8 3 5 1 8-3 2-5 0z" fill="#111" /><path d="M9 5v6h4V8z" fill="#111" stroke="none" /></svg>
        <div className="text-right text-[11.1px] leading-4 tracking-[-0.1px]"><div>8:38 AM</div><div className="tracking-[0.15px]">7/9/2025</div></div>
      </div>
    </div>
  );
}

/* ---------- Application ---------- */
export default function App() {
  return (
    <div className="flex h-[768px] w-[1366px] flex-col overflow-hidden bg-[#141414] font-['Open_Sans',sans-serif] text-[#e6e6e6]">
      <div className="flex h-[34px] shrink-0">
        <div className="flex w-[580px] items-center pl-4 text-[11.8px] tracking-[-0.12px] whitespace-nowrap">
          <svg width="17" height="17" viewBox="0 0 17 17" fill="none" stroke={W}><path d="M1 1.500h15v14H3L1 13.500zM4.500 1.500v5h8v-5M5.500 15.500v-5h7v5M8 12v3" /></svg>
          <svg className="ml-[14px]" width="16" height="16" viewBox="0 0 16 16" fill="none" stroke={W} strokeWidth="1.4"><path d="M1.500 1v5.500H7M2 6q4-5.500 9-3.500 4 3 1 7L6.500 15.500" /></svg>
          <svg className="ml-[14px]" width="16" height="16" viewBox="0 0 16 16" fill="none" stroke="#5e5e5e" strokeWidth="1.4"><path d="M14.500 1v5.500H9M14 6q-4-5.500-9-3.500-4 3-1 7l5.500 6" /></svg>
          <span className="mt-[6px] ml-[9px]">DSA PROJECT <span className="mx-px">•</span> Last saved: 7/5/2025 at 10:17 PM</span>
          <svg className="mt-0.5 ml-[7px]" width="9" height="6" viewBox="0 0 9 6" fill="none" stroke={W}><path d="M.8.8h7.400L4.500 5z" /></svg>
        </div>
        <div className="mt-[5px] flex h-6 w-[400px] items-center rounded-[2px] bg-[#1f1f1f] pl-[17px] text-[13.3px] text-[#c8c8c8]">
          <svg width="17" height="17" viewBox="0 0 17 17" fill="none" stroke={W} strokeWidth="1.2" className="mr-[10px]"><circle cx="10.5" cy="6.5" r="5.5" /><path d="M6.500 10.500L.5 16.500" /></svg>
          <span className="pt-px">Search</span>
        </div>
        <div className="flex flex-1 items-center pt-[2px] text-[11.7px]">
          <span className="ml-[173px] tracking-[-0.1px]">Sign in</span>
          <div className="ml-[11px] flex size-5 items-center justify-center rounded-full bg-[#3a3a3a]"><svg width="14" height="16" viewBox="0 0 14 16" fill="none" stroke={W} strokeWidth="1.2"><circle cx="7" cy="4" r="2.8" /><path d="M1 9.500h12q0 5-6 5t-6-5z" /></svg></div>
          <svg className="ml-[32px]" width="10" height="10" viewBox="0 0 10 10"><path d="M0 5.500h10" stroke="#fff" /></svg>
          <svg className="ml-[34px]" width="10" height="10" viewBox="0 0 10 10" fill="none"><rect x=".5" y=".5" width="9" height="9" stroke="#fff" /></svg>
          <svg className="ml-[34px]" width="11" height="11" viewBox="0 0 11 11"><path d="M.5.5l10 10M10.500.5l-10 10" stroke="#fff" /></svg>
        </div>
      </div>

      <div className="flex h-9 shrink-0 items-start pt-[5px] pl-[23px] text-[13.35px] leading-[22px] tracking-[-0.04px]">
        <span className="mr-[33px]">File</span>
        <span className="mr-[23px] border-b-2 border-[#2aac94] pb-px font-bold tracking-[-0.4px] text-white">Home</span>
        <span className="mr-[24px]">Insert</span>
        <span className="mr-[24px]">Modeling</span>
        <span className="mr-[24px]">View</span>
        <span className="mr-[24px]">Optimize</span>
        <span>Help</span>
        <div className="-mt-px mr-[6px] ml-auto flex h-6 w-[84px] items-center rounded-[4px] bg-[#0d6a58] pl-[7px] text-[12px] text-[#b9d6cf]">
          <svg width="16" height="15" viewBox="0 0 16 15" fill="none" stroke="#b9d6cf" strokeWidth="1.2" className="mr-[8px]"><path d="M3 3.500H.8v10.500H12V11M9.500 1l5 4.500-5 4.500V7.500Q5 7 3.500 10 4 4 9.500 3.500z" /></svg>
          <span className="pt-0.5 tracking-[-0.3px]">Share</span><ChevronDown size={14} className="ml-[3px]" strokeWidth={1.8} />
        </div>
      </div>

      <Ribbon />

      <div className="flex h-[526px] shrink-0 border-b border-[#5c5c5c]">
        <NavRail />
        <div className="flex w-[930px] shrink-0 flex-col">
          <div className="flex min-h-0 flex-1">
            <Canvas />
            <div className="flex w-[33px] shrink-0 flex-col items-center border-l border-[#b3b0ad] bg-white text-[#252423]">
              <ChevronsLeft size={12} strokeWidth={2.5} className="mt-[13px]" />
              <svg className="mt-[17px] ml-2" width="10" height="10" viewBox="0 0 10 10"><path d="M9 .5v9M6.500 2v6M4 3.500v3M0 5h2.500" stroke="#444" strokeWidth="1.2" /></svg>
              <span className="mt-[10px] text-[14.4px] font-semibold tracking-[-0.1px] [writing-mode:vertical-rl]">Filters</span>
            </div>
          </div>
          <PageTabs />
        </div>
        <BuildPane />
        <DataPane />
        <Rail />
      </div>

      <div className="flex h-6 shrink-0 items-center pl-1 text-[11.6px] tracking-[-0.1px]">
        <span className="pt-px">Page 3 of 5</span>
        <div className="ml-auto flex items-center">
          <svg width="116" height="13" viewBox="0 0 116 13" stroke="#ddd"><path d="M1 6.500h5" strokeWidth="1.5" /><path d="M9 6.500h100M58.500 4v5" /><rect x="39.5" y="1.5" width="3" height="10" fill="#ddd" /></svg>
          <svg className="-ml-[1px]" width="8" height="8" viewBox="0 0 8 8" stroke="#ddd"><path d="M4 0v8M0 4h8" /></svg>
          <span className="ml-[13px]">67%</span>
          <svg className="mr-[18px] ml-[20px]" width="15" height="11" viewBox="0 0 15 11" fill="none" stroke="#ddd"><rect x=".5" y=".5" width="14" height="10" rx="1.5" /><path d="M5 3H3v5h2M10 3h2v5h-2" /></svg>
        </div>
      </div>
      <Taskbar />
    </div>
  );
}
